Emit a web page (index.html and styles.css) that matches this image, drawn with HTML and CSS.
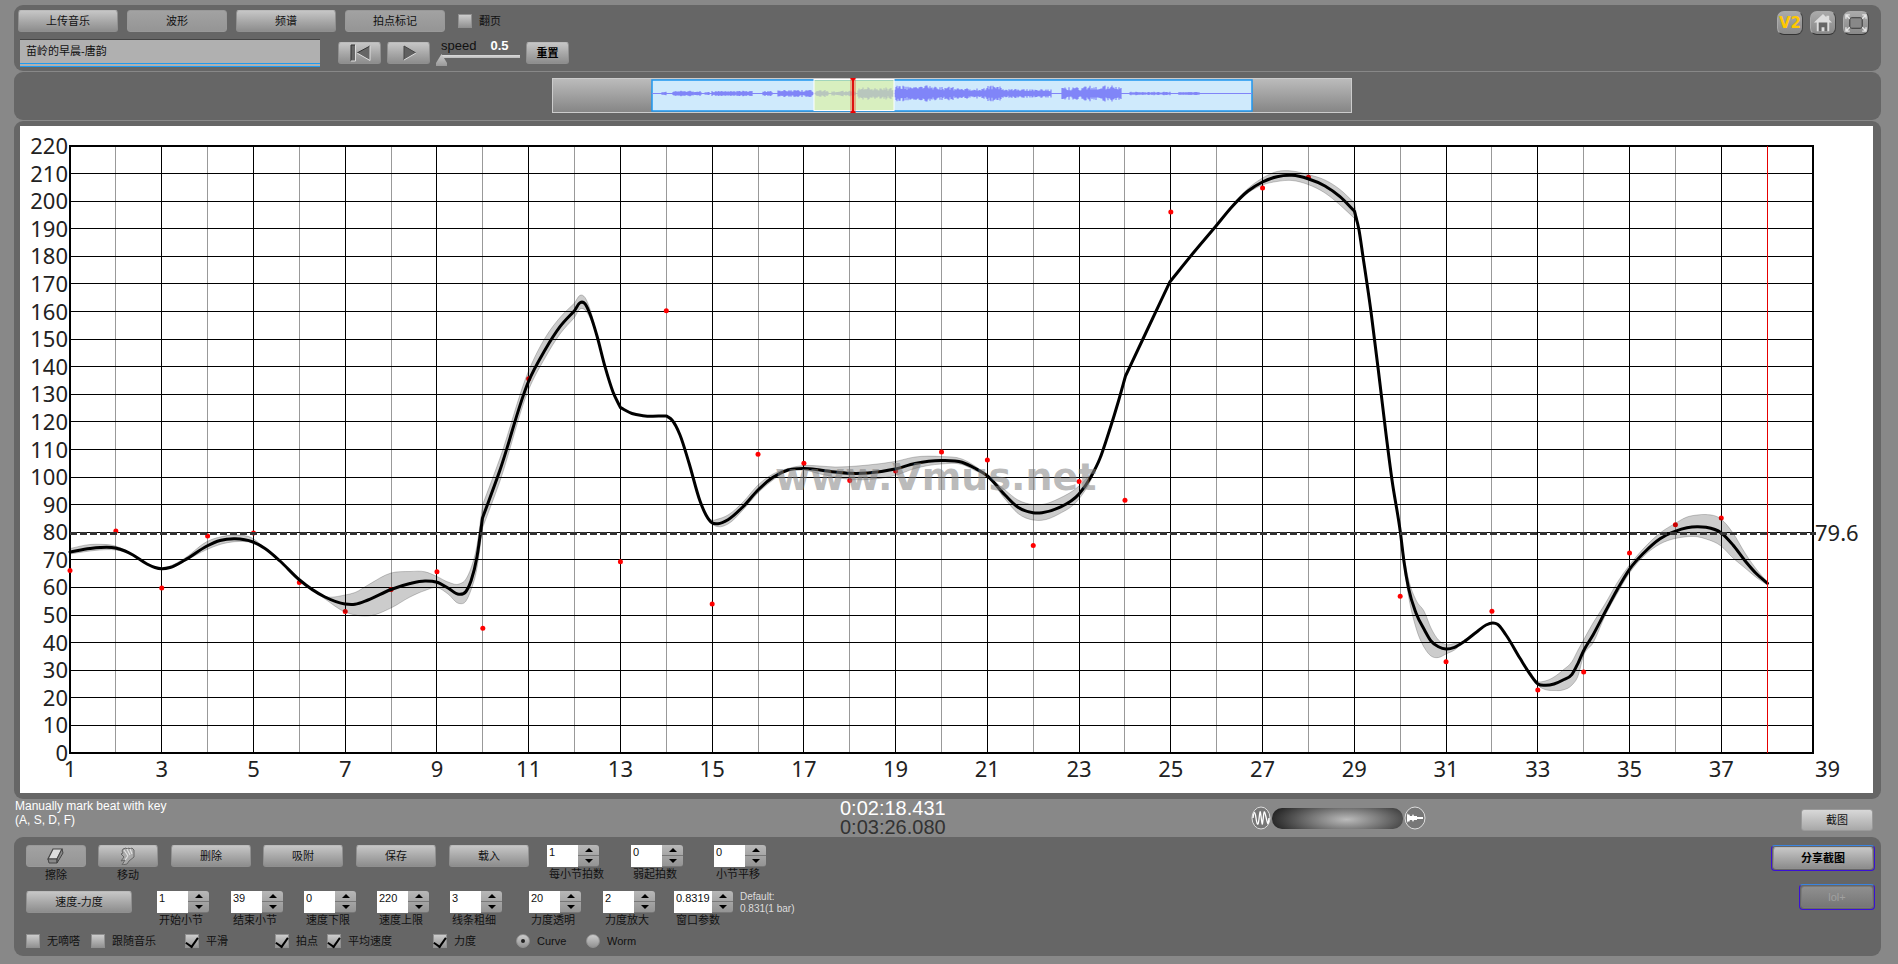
FILE: index.html
```html
<!DOCTYPE html>
<html lang="zh-CN">
<head>
<meta charset="utf-8">
<title>Vmus.net</title>
<link rel="stylesheet" href="styles.css">
</head>
<body>
<header class="panel toolbar">
  <div class="toolbar-main">
    <div class="tool-row">
      <button class="btn tab">上传音乐</button>
      <button class="btn tab pressed">波形</button>
      <button class="btn tab">频谱</button>
      <button class="btn tab pressed">拍点标记</button>
      <label class="check page-check"><input type="checkbox">翻页</label>
    </div>
    <div class="play-row">
      <input class="song" type="text" value="苗岭的早晨-唐韵" aria-label="曲目">
      <button class="btn transport" aria-label="回到开头"><svg width="24" height="18" viewBox="0 0 24 18"><path d="M3 1h4v16H3z" fill="#666"/><path d="M3 17V1h4" fill="none" stroke="#333"/><path d="M22 2v14L9 9z" fill="#666"/><path d="M22 2L9 9" stroke="#333"/><path d="M9 9l13 7.500V2M7.500 1v16H3" fill="none" stroke="#ddd"/></svg></button>
      <button class="btn transport" aria-label="播放"><svg width="24" height="18" viewBox="0 0 24 18"><path d="M7 2v14l12-7z" fill="#606060"/><path d="M7 16V2l12 7" fill="none" stroke="#444"/><path d="M7 16l12-7" stroke="#ddd"/></svg></button>
      <div class="speed">
        <div class="speed-text"><label for="speed">speed</label><output for="speed">0.5</output></div>
        <input id="speed" type="range" min="0.5" max="2" step="0.1" value="0.5">
      </div>
      <button class="btn transport strong">重置</button>
    </div>
  </div>
  <nav class="links">
    <a href="#v2" class="badge v2">V2</a>
    <a href="#home" class="badge" aria-label="主页"><svg viewBox="0 0 25 23"><path d="M12.500 2L3 11h3v9h13v-9h3l-3-3V4h-3v1.500z" fill="#ddd"/><path d="M8 20v-9h9v9h-3v-4h-3v4z" fill="#666"/></svg></a>
    <a href="#full" class="badge" aria-label="全屏"><svg viewBox="0 0 25 23"><rect x="6" y="6" width="13" height="11" rx="2" fill="#888" stroke="#333"/><path d="M2 7V3h4M2 3l4 4M19 3h4v4M23 3l-4 4M2 16v4h4M2 20l4-4M19 20h4v-4M23 20l-4-4" fill="none" stroke="#e4e4e4" stroke-width="1.500"/></svg></a>
  </nav>
</header>

<section class="panel overview">
  <svg id="overview" class="overview-svg" viewBox="0 0 800 35" role="img" aria-label="波形概览"></svg>
</section>

<main class="panel chart-panel">
  <svg id="chart" class="chart" viewBox="20 126 1853 667" role="img" aria-label="速度曲线"></svg>
</main>

<section class="status">
  <p class="hint">Manually mark beat with key<br>(A, S, D, F)</p>
  <div class="time"><div>0:02:18.431</div><div class="total">0:03:26.080</div></div>
  <div class="zoomer">
    <svg width="20" height="24" viewBox="0 0 20 24"><ellipse cx="10" cy="12" rx="9" ry="11" fill="#777" stroke="#ddd"/><path d="M2 12C3 5 4 5 5 12s2 9 3 1 1-10 2-3 1 12 2 4 1-12 3-3 2 8 3 1" fill="none" stroke="#fff" stroke-width="1.300"/></svg>
    <div class="pill"></div>
    <svg width="22" height="24" viewBox="0 0 22 24"><ellipse cx="11" cy="12" rx="10" ry="11" fill="#777" stroke="#ddd"/><path d="M3 7l1 2 1-1 1 2 2 0 1-2 1 2h3v1h6v2h-6v1h-3l-1 2-1-2H6l-1 2-1-1-1 2z" fill="#fff"/></svg>
  </div>
  <button class="btn shot">截图</button>
</section>

<footer class="panel controls">
  <div class="control-rows">
    <div class="row row-edit">
      <div class="stack"><button class="btn small pressed" id="erase"><svg width="18" height="16" viewBox="0 0 18 16"><path d="M6 1h9l-5 10H1z" fill="#ddd" stroke="#444" stroke-width="1.200"/><path d="M1 11h9v4H2zM10 11l5-10 1 4-6 10z" fill="#888" stroke="#444"/></svg></button><label for="erase">擦除</label></div>
      <div class="stack"><button class="btn small" id="move"><svg width="20" height="18" viewBox="0 0 20 18"><path d="M5 2l3-1 1 1 2-1 1 1 2-1 2 2v7l-5 4-2 3-5 1 3-5-4 1 3-4-3-3 2-1-1-2z" fill="#aaa" stroke="#666"/><path d="M6 3l4 6M9 2l3 6M12 2l2 5M7 13l3-4" stroke="#e2e2e2" stroke-width="1.200"/></svg></button><label for="move">移动</label></div>
      <button class="btn wide">删除</button>
      <button class="btn wide">吸附</button>
      <button class="btn wide">保存</button>
      <button class="btn wide">载入</button>
      <div class="spin"><input id="s1" type="text" value="1"><span class="arrows"><button aria-label="增加"></button><button aria-label="减少"></button></span><label for="s1">每小节拍数</label></div>
      <div class="spin"><input id="s2" type="text" value="0"><span class="arrows"><button aria-label="增加"></button><button aria-label="减少"></button></span><label for="s2">弱起拍数</label></div>
      <div class="spin"><input id="s3" type="text" value="0"><span class="arrows"><button aria-label="增加"></button><button aria-label="减少"></button></span><label for="s3">小节平移</label></div>
    </div>
    <div class="row row-range">
      <button class="btn mode">速度-力度</button>
      <div class="spin"><input id="s4" type="text" value="1"><span class="arrows"><button aria-label="增加"></button><button aria-label="减少"></button></span><label for="s4">开始小节</label></div>
      <div class="spin"><input id="s5" type="text" value="39"><span class="arrows"><button aria-label="增加"></button><button aria-label="减少"></button></span><label for="s5">结束小节</label></div>
      <div class="spin"><input id="s6" type="text" value="0"><span class="arrows"><button aria-label="增加"></button><button aria-label="减少"></button></span><label for="s6">速度下限</label></div>
      <div class="spin"><input id="s7" type="text" value="220"><span class="arrows"><button aria-label="增加"></button><button aria-label="减少"></button></span><label for="s7">速度上限</label></div>
      <div class="spin"><input id="s8" type="text" value="3"><span class="arrows"><button aria-label="增加"></button><button aria-label="减少"></button></span><label for="s8">线条粗细</label></div>
      <div class="spin"><input id="s9" type="text" value="20"><span class="arrows"><button aria-label="增加"></button><button aria-label="减少"></button></span><label for="s9">力度透明</label></div>
      <div class="spin"><input id="s10" type="text" value="2"><span class="arrows"><button aria-label="增加"></button><button aria-label="减少"></button></span><label for="s10">力度放大</label></div>
      <div class="spin spin-wide"><input id="s11" type="text" value="0.8319"><span class="arrows"><button aria-label="增加"></button><button aria-label="减少"></button></span><label for="s11">窗口参数</label></div>
      <p class="default">Default:<br>0.831(1 bar)</p>
    </div>
    <div class="row row-flags">
      <label class="check"><input type="checkbox">无嘀嗒</label>
      <label class="check"><input type="checkbox">跟随音乐</label>
      <label class="check"><input type="checkbox" checked>平滑</label>
      <label class="check"><input type="checkbox" checked>拍点</label>
      <label class="check"><input type="checkbox" checked>平均速度</label>
      <label class="check"><input type="checkbox" checked>力度</label>
      <label class="check"><input type="radio" name="view" checked>Curve</label>
      <label class="check"><input type="radio" name="view">Worm</label>
    </div>
  </div>
  <div class="actions">
    <span class="glow"><button class="btn share strong">分享截图</button></span>
    <span class="glow"><button class="btn extra" disabled>lol+</button></span>
  </div>
</footer>
<script src="chart.js"></script>
</body>
</html>
```
FILE: styles.css
```css
* { box-sizing: border-box; }
body {
  margin: 0;
  padding: 5px 17px 6px 14px;
  min-height: 100vh;
  background: #888;
  font: 11px/14px "Liberation Sans", "Noto Sans CJK SC", sans-serif;
  color: #111;
}
p { margin: 0; }
button, input { font: inherit; color: inherit; margin: 0; }
.panel { background: #666; border-radius: 9px; margin-bottom: 1px; }

.btn {
  height: 22px;
  padding: 0;
  border: 1px solid #8f8f8f;
  border-top-color: #bbb;
  border-radius: 3px;
  background: linear-gradient(#c6c6c6, #a9a9a9 50%, #8d8d8d);
  display: inline-flex;
  align-items: center;
  justify-content: center;
  line-height: 14px;
}
.pressed { background: linear-gradient(#a2a2a2, #959595); border-color: #999; }
.strong { font-weight: bold; color: #000; }

.toolbar { display: flex; justify-content: space-between; min-height: 66px; padding: 5px 12px 4px 4px; }
.tool-row { display: flex; gap: 9px; align-items: center; }
.tab { width: 100px; }
.page-check { margin-left: 4px; }
.play-row { display: flex; align-items: center; margin-top: 7px; padding-left: 2px; }
.song {
  width: 300px;
  height: 28px;
  margin-right: 18px;
  padding: 0 6px 4px;
  border: 0;
  border-top: 1px solid #444;
  border-bottom: 4px double #1e9bf0;
  background: #b0b0b0;
}
.transport { width: 43px; margin-right: 6px; }
.speed { width: 84px; margin-right: 6px; display: flex; flex-direction: column; }
.speed-text { display: flex; gap: 14px; padding: 0 0 2px 5px; font-size: 13px; line-height: 12px; }
.speed-text output { color: #fff; font-weight: bold; }
.speed input {
  appearance: none;
  width: 84px;
  height: 12px;
  background: linear-gradient(#ddd, #bbb) 5px 1px / 79px 3px no-repeat;
}
.speed input::-webkit-slider-thumb {
  appearance: none;
  width: 11px;
  height: 12px;
  background: linear-gradient(#ccc, #999);
  clip-path: polygon(50% 0, 100% 75%, 100% 100%, 0 100%, 0 75%);
}
.links { display: flex; gap: 7px; padding-top: 1px; }
.badge {
  width: 26px;
  height: 24px;
  border-radius: 7px;
  border: 1px solid #aaa;
  border-right-color: #444;
  border-bottom-color: #333;
  background: linear-gradient(#aaa, #888);
  display: flex;
  align-items: center;
  justify-content: center;
  text-decoration: none;
}
.badge svg { width: 24px; height: 22px; }
.v2 { color: #ffc800; font: 900 15px/20px "DejaVu Sans", sans-serif; }

.overview { padding: 6px 0 7px 8px; display: flex; justify-content: center; }
.overview-svg { width: 800px; height: 35px; display: block; }

.chart-panel { padding: 5px 8px 6px 6px; margin: 0; }
.chart { display: block; width: 100%; height: auto; background: #fff; font: 22px "Noto Sans", sans-serif; }
.grid-main { stroke: #000; }
.grid-sub { stroke: #999; }
.frame { fill: none; stroke: #000; stroke-width: 2; }
.average { stroke: #333; stroke-width: 3; stroke-dasharray: 7 3; }
.end { stroke: #e60000; }
.band { fill: rgba(0, 0, 0, .2); stroke: rgba(0, 0, 0, .2); }
.curve { fill: none; stroke: #000; stroke-width: 3; stroke-linejoin: round; stroke-linecap: round; }
.beat { fill: #f00; }
.axis { fill: #222; }
.watermark { font: bold 38px "DejaVu Sans", sans-serif; fill: rgba(128, 128, 128, .55); }

.status { display: grid; grid-template-columns: 826px 411px 1fr auto; height: 38px; padding: 0 8px 0 0; }
.time { grid-column: 2; grid-row: 1; color: #fff; font-size: 20px; line-height: 19px; }
.total { color: #333; }
.hint { grid-column: 1; grid-row: 1; padding-left: 1px; color: #fff; font-size: 12px; }
.zoomer { display: flex; align-items: center; gap: 1px; }
.pill {
  width: 131px;
  height: 21px;
  border-radius: 10px;
  background: radial-gradient(ellipse 60% 110% at 57% 55%, #bbb, #777 45%, #222);
}
.shot { width: 72px; margin-top: 10px; border-color: #999; background: linear-gradient(#d8d8d8, #a8a8a8); }

.controls { display: flex; justify-content: space-between; min-height: 119px; margin: 0; padding: 8px 6px 8px 12px; }
.row { display: grid; align-items: start; }
.row-edit { grid-template-columns: 72px 73px 92px 93px 93px 98px 84px 83px 60px; height: 46px; }
.row-range { grid-template-columns: 131px 74px 73px 73px 73px 79px 74px 71px 66px auto; height: 43px; }
.row-flags { grid-template-columns: 65px 94px 90px 52px 106px 83px 70px auto; }
.small { width: 60px; }
.wide { width: 80px; }
.mode { width: 106px; }
.stack { display: flex; flex-direction: column; width: 60px; }
.stack label { text-align: center; padding-top: 1px; }
.spin { display: grid; grid-template-columns: 31px 21px; }
.spin-wide { grid-template-columns: 38px 21px; }
.spin input { width: 100%; height: 22px; padding: 0 2px 8px; border: 0; background: #fff; }
.spin label { grid-column: 1 / -1; white-space: nowrap; padding: 0 0 0 2px; }
.arrows { display: grid; grid-template-rows: 11px 11px; }
.arrows button {
  padding: 0;
  border: 0;
  border-bottom: 1px solid #777;
  border-radius: 0 3px 0 0;
  background: linear-gradient(#b8b8b8, #a6a6a6);
  display: grid;
  place-items: center;
}
.arrows button::before { content: ""; border: 4px solid transparent; border-top: 0; border-bottom: 4px solid #000; }
.arrows button + button { border-radius: 0 0 3px 0; background: linear-gradient(#a4a4a4, #949494); }
.arrows button + button::before { border-bottom: 0; border-top: 4px solid #000; }
.default { font-size: 10px; line-height: 12px; color: #ddd; }
.check { display: flex; align-items: center; gap: 7px; white-space: nowrap; }
.check input {
  appearance: none;
  width: 14px;
  height: 14px;
  border: 1px solid #909090;
  background: linear-gradient(#ccc, #939393);
  display: grid;
  place-items: center;
}
.check input[type="checkbox"]:checked::before {
  content: "";
  width: 6px;
  height: 10px;
  margin-bottom: 3px;
  border: solid #000;
  border-width: 0 2px 2px 0;
  transform: rotate(35deg);
}
.check input[type="radio"] { border-radius: 50%; }
.check input[type="radio"]:checked::before { content: ""; width: 4px; height: 4px; border-radius: 50%; background: #222; }
.actions { display: flex; flex-direction: column; align-items: flex-end; gap: 13px; }
.glow { display: flex; padding: 1px; border: 1px solid #3a10d8; border-top-color: #3a84e0; border-radius: 4px; }
.share { width: 100px; height: 22px; }
.extra { width: 72px; height: 22px; color: #a0a0a0; background: linear-gradient(#8f8f8f, #767676); border-color: #7a7a7a; }
```
FILE: chart.js
```js
const NS = 'http://www.w3.org/2000/svg';
function add(parent, tag, attrs, text) {
  const el = document.createElementNS(NS, tag);
  for (const key in attrs) el.setAttribute(key, attrs[key]);
  if (text !== undefined) el.textContent = text;
  parent.appendChild(el);
  return el;
}

// Plot frame
const L = 70, R = 1813, T = 146, B = 753;
const px = beat => L + (beat - 1) * (R - L) / 38;
const py = tempo => B - tempo * (B - T) / 220;

// x, tempo line, band top, band bottom
const points = [
[70,552,548.5,554],[90,548.5,544.5,551],[100,547.5,544.3,550],[115.5,548,546,550],[125,551,550,552],[133,555],[147,564],[155,567.5],[161.5,568.7],[170,567.5,566,568.5],[185,560,558,561],[207,546,541.5,549.5],[220,540.5,537,544.5],[235,538.7,535,541.7],[253,542,538.5,543],[265,548.5],[280,561],[299,579.5],[325,597,596.5,599],[345,604,595,612],[355,604.2,592.5,615],[368,600,585,616],[391,589.5,573,608],[410,583.5,571.5,597],[425,581,571.8,590.5],[437,582.3,576.5,587.5],[448,588,582,594],[459,594.3,584,603.5],[466,591.5,579,601],[471,581,568,590],[477,556.7,545,568],[482.5,518,505,528],[500,470,458,481],[528.5,381.5,371,390],[545,350,338,358],[560,326.7,317.5,334],[574.5,310.7,303,317.5],[580,302.7,295.3,309],[585,303.7,297.5,310],[590,314,309,318],[597,336,335,337],[605,366.7],[613,392],[620.5,407.7],[632,413.5],[643,415.7],[666.5,416],[672,420],[680,435],[689,463],[700,501],[706,515],[712,522.8,520,524],[718,523.7,519,526.7],[728,519.7,515,524],[743,506.7,502,510],[758,490,485,493],[773,477.3,474,480],[788,470,468.5,471],[804,468.5,465.5,470],[820,470,466,474],[835,472,467,477],[850,473.3,466.5,479.5],[868,473,465,479.5],[895,469,461.5,475.5],[915,463.5,457,468.5],[941,460.5,456.5,464],[962,462.3,459,464.5],[975,468.3,466,470.5],[987.5,476,475.5,477],[1005,495,490,499],[1018,507.3,500,513.5],[1033,512.7,504.5,520],[1042,512.7,504.5,520.3],[1059,507.7,498.5,514],[1079,494,486,499],[1091,476.7,473,480],[1100,458.3],[1107,438],[1114,416],[1118.5,401],[1125.5,376],[1142,341],[1170,281.7],[1193,253.3],[1216,226],[1232,206.7,205,208],[1248,191,188.5,193],[1262.5,182,178,185],[1277,176.7,171.5,181.5],[1292,175.3,171,180.5],[1308,178.7,174.5,184.5],[1325,186,180,193],[1340,196.7,189.5,205],[1354.5,211.3,203,218.5],[1359,230],[1363,256.7],[1371,311.7],[1380,384],[1386,434],[1392,480],[1400.5,533.3],[1404,561.7,556,566],[1408.5,588,579,596],[1416,613,600,628],[1424.5,630,612,648],[1431,641,628,656],[1438.5,646.7,640,657.5],[1446,649,644.5,654],[1454.5,647.3,643.5,650],[1464,641.7],[1477,631.7],[1486,625],[1493,623],[1497.5,624.3],[1506,635],[1520,658.3],[1530,674],[1538,684,681.5,685.5],[1545,685.3,681,689.5],[1554,684,677,690.5],[1563,680,670,690],[1572,674.3,661.5,685],[1578,663.3,650,676],[1583.5,651,640,656],[1593,635,623,643],[1605,612.3,604,616],[1617,590,583,594],[1629.5,569.3,565,573],[1644,552.7,548,556],[1660,538.7,533,544],[1675,531.3,523.5,538.5],[1687,527.7,517,536.7],[1697,526.7,515,536.7],[1706,527.3,514.5,539],[1721,532.7,519,546],[1733,545,533,558],[1745,560.7,553,568],[1757,574.3,570,578],[1767.5,583.3,582,585]
];
// x positions where the slope changes abruptly
const corners = new Set([482.5, 574.5, 620.5, 666.5, 1125.5, 1170, 1354.5]);
const beats = [[1,570.5],[2,531],[3,588],[4,536],[5,533],[6,582.5],[7,611.5],[8,589.5],[9,571.7],[10,628.3],[11,378.7],[13,561.7],[14,310.7],[15,604],[16,454.3],[17,463.3],[18,480.5],[19,471],[20,452],[21,460],[22,545.5],[23,481.5],[24,500.3],[25,212],[27,188],[28,177.3],[30,596.3],[31,661.7],[32,611.3],[33,690],[34,672],[35,553],[36,524.7],[37,518]];

// Cubic segments with parabolic tangents, one-sided at corners
function smooth(pts) {
  const n = pts.length, h = [], d = [];
  for (let i = 0; i < n - 1; i++) {
    h.push(pts[i + 1][0] - pts[i][0]);
    d.push((pts[i + 1][1] - pts[i][1]) / h[i]);
  }
  const slope = (i, side) => {
    if (i === 0) return d[0];
    if (i === n - 1) return d[n - 2];
    if (corners.has(pts[i][0])) return side < 0 ? d[i - 1] : d[i];
    return (d[i - 1] * h[i] + d[i] * h[i - 1]) / (h[i - 1] + h[i]);
  };
  let s = '';
  for (let i = 0; i < n - 1; i++) {
    const t = h[i] / 3;
    s += `C${pts[i][0] + t} ${pts[i][1] + slope(i, 1) * t} ${pts[i + 1][0] - t} ${pts[i + 1][1] - slope(i + 1, -1) * t} ${pts[i + 1][0]} ${pts[i + 1][1]}`;
  }
  return s;
}

const chart = document.getElementById('chart');
const crisp = v => Math.floor(v) + 0.5;
for (let b = 2; b < 39; b++) {
  add(chart, 'line', { class: b % 2 ? 'grid-main' : 'grid-sub', x1: crisp(px(b)), x2: crisp(px(b)), y1: T, y2: B });
}
for (let v = 10; v < 220; v += 10) {
  add(chart, 'line', { class: 'grid-main', x1: L, x2: R, y1: crisp(py(v)), y2: crisp(py(v)) });
}
add(chart, 'rect', { class: 'frame', x: L, y: T, width: R - L, height: B - T });
for (const [b, y] of beats) add(chart, 'circle', { class: 'beat', cx: px(b), cy: y, r: 2.5 });
const upper = points.map(p => [p[0], p[2] ?? p[1]]);
const lower = points.map(p => [p[0], p[3] ?? p[1]]).reverse();
add(chart, 'path', { class: 'band', d: `M${upper[0]}${smooth(upper)}L${lower[0]}${smooth(lower)}Z` });
add(chart, 'path', { class: 'curve', d: `M${points[0][0]} ${points[0][1]}${smooth(points)}` });
add(chart, 'line', { class: 'average', x1: L, x2: 1816, y1: 533.5, y2: 533.5 });
add(chart, 'line', { class: 'end', x1: 1767.5, x2: 1767.5, y1: T, y2: B });
for (let v = 0; v <= 220; v += 10) {
  add(chart, 'text', { class: 'axis', x: 68, y: Math.round(py(v)) + 8, 'text-anchor': 'end' }, v);
}
for (let b = 1; b < 39; b += 2) {
  add(chart, 'text', { class: 'axis', x: px(b), y: 777, 'text-anchor': 'middle' }, b);
}
add(chart, 'text', { class: 'axis', x: 1815, y: 777 }, 39);
add(chart, 'text', { class: 'axis', x: 1815, y: 541 }, '79.6');
add(chart, 'text', { class: 'watermark', x: 775, y: 490 }, 'www.Vmus.net');

// Overview strip: [from, to, amplitude]
const loud = [[110,115,2],[121,150,3],[153,158,2],[160,201,3],[211,221,3],[226,262,4],[264,277,4],[280,304,3],[306,342,7],[343,358,9],[358,384,9],[384,402,8],[402,434,6],[434,450,9],[450,500,5],[510,530,7],[530,570,9],[578,619,2],[627,648,2]];
const strip = document.getElementById('overview');
const defs = add(strip, 'defs', {});
const grad = add(defs, 'linearGradient', { id: 'metal', x2: 0, y2: 1 });
add(grad, 'stop', { offset: 0, 'stop-color': '#bcbcbc' });
add(grad, 'stop', { offset: 1, 'stop-color': '#858585' });
add(strip, 'rect', { x: .5, y: .5, width: 799, height: 34, fill: 'url(#metal)', stroke: '#ccc' });
add(strip, 'rect', { x: 100, y: 2, width: 600, height: 31, fill: '#cfeafc', stroke: '#1e96f0', 'stroke-width': 1.5 });
let wave = 'M100 15.5H700', seed = 7;
for (const [from, to, amp] of loud) {
  for (let x = from; x < to; x++) {
    seed = (seed * 73 + 41) % 997;
    const a = amp * (0.4 + seed / 1994);
    wave += `M${x} ${15.5 - a}V${15.5 + a}`;
  }
}
add(strip, 'path', { d: wave, stroke: '#8085f8', fill: 'none', 'stroke-width': 1.2 });
add(strip, 'rect', { x: 262, y: 1.5, width: 80, height: 31, fill: 'rgba(222,242,150,.6)', stroke: '#fff' });
add(strip, 'rect', { x: 298, y: 1, width: 6, height: 33, fill: 'rgba(240,80,60,.4)' });
add(strip, 'path', { d: 'M301 0V35', stroke: '#d11', 'stroke-width': 2 });
add(strip, 'path', { d: 'M298 0h6l-3 4zM298 35h6l-3-4z', fill: '#e00' });
```
